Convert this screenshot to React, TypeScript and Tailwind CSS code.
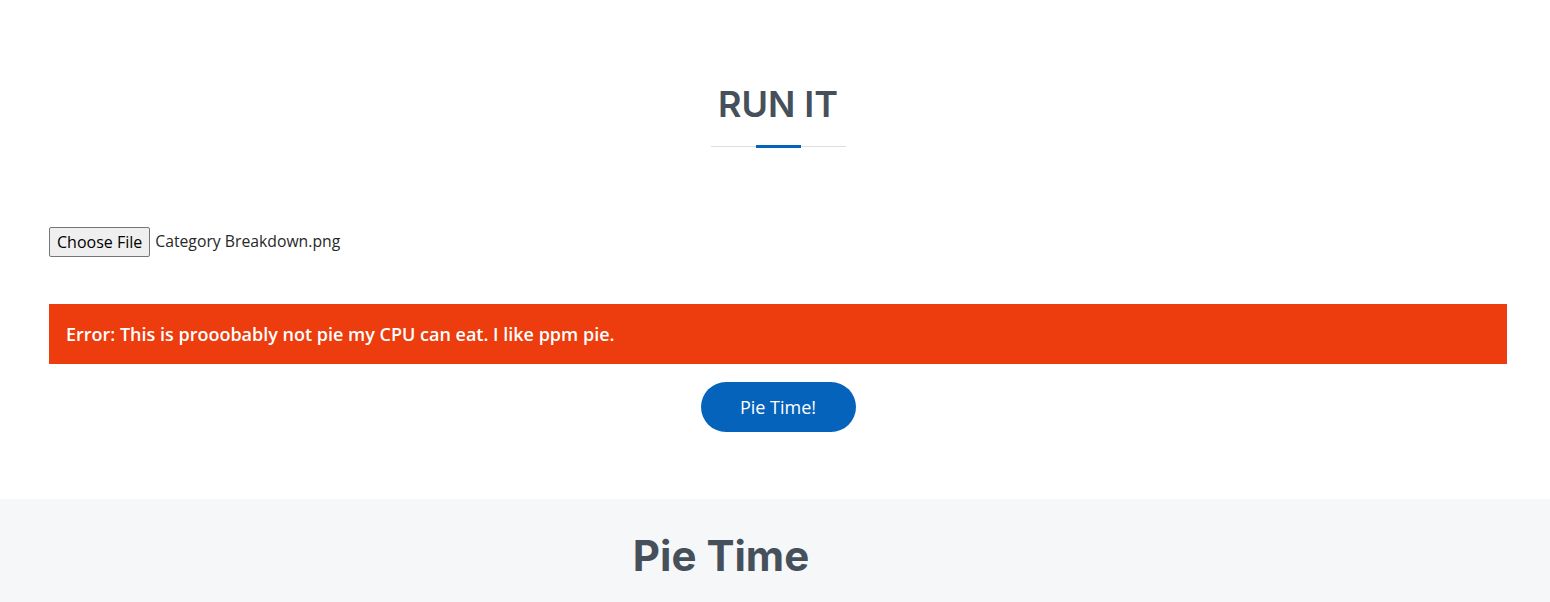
import React from 'react';

/**
 * Section title with the grey rule and blue accent underneath
 */
function SectionTitle({ children }: { children: React.ReactNode }) {
  return (
    <div className="flex flex-col items-center">
      <h2 className="font-['Inter',sans-serif] text-[36px] leading-[36px] font-semibold text-[#45505b] uppercase">
        {children}
      </h2>
      {/* Rule: grey line with blue accent centred on it */}
      <div className="mt-[23px] w-[135px] h-[3px] flex flex-col justify-center items-center relative">
        <div className="w-full h-px bg-[#dddddd]" />
        <div className="absolute top-0 w-[45px] h-[3px] bg-[#0563bb]" />
      </div>
    </div>
  );
}

export default function App() {
  return (
    <div className="w-[1550px] h-[602px] overflow-hidden bg-white font-['Open_Sans',sans-serif] text-[#272829]">
      {/* Run it section */}
      <section className="h-[499px] pt-[86px] pl-[49px] pr-[43px]">
        <SectionTitle>Run It</SectionTitle>

        {/* Fake file input (real one can't show a chosen filename) */}
        <div className="mt-[79px] flex items-center gap-[5px]">
          <button className="h-[30px] px-[7px] bg-[#efefef] border border-[#767676] rounded-[2px] text-[16px] leading-none text-black font-['Open_Sans',sans-serif]">
            Choose File
          </button>
          <span className="text-[15.75px]">Category Breakdown.png</span>
        </div>

        {/* Error banner */}
        <div className="mt-[47px] h-[60px] bg-[#ed3c0d] flex items-center px-[17px]">
          <p className="text-white font-semibold text-[18px]">
            Error: This is prooobably not pie my CPU can eat. I like ppm pie.
          </p>
        </div>

        <div className="mt-[18px] flex justify-center">
          <button className="w-[155px] h-[50px] rounded-full bg-[#0563bb] text-white text-[18px]">
            Pie Time!
          </button>
        </div>
      </section>

      {/* Pie time section */}
      <section className="h-[103px] bg-[#f6f7f9] pt-[36px]">
        <div className="flex justify-center pr-[108px]">
          <h2 className="font-['Inter',sans-serif] text-[42px] leading-[42px] font-bold text-[#45505b]">
            Pie Time
          </h2>
        </div>
      </section>
    </div>
  );
}
